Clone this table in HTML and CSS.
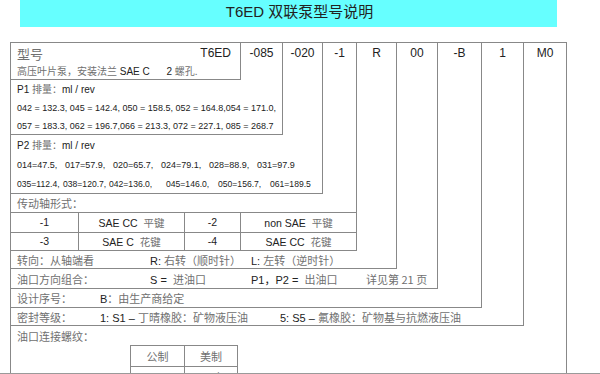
FILE: index.html
```html
<!DOCTYPE html>
<html lang="zh">
<head>
<meta charset="utf-8">
<title>T6ED 双联泵型号说明</title>
<link rel="stylesheet" href="styles.css">
</head>
<body>
<div class="page">
  <div class="banner">T6ED <span>双联泵型号说明</span></div>
  <div class="frame">
    <div class="top">
      <div class="box l7">
        <div class="top">
          <div class="box l6">
            <div class="top">
              <div class="box l5">
                <div class="top">
                  <div class="box l4">
                    <div class="top">
                      <div class="box l3">
                        <div class="top">
                          <div class="box l2">
                            <div class="top">
                              <div class="box l1">
                                <div class="top">
                                  <div class="box l0">
                                    <div class="model-row">
                                      <span class="zh big">型号</span>
                                      <span class="model-code">T6ED</span>
                                    </div>
                                    <div class="model-desc"><span class="zh">高压叶片泵，安装法兰</span> SAE C      2 <span class="zh">螺孔.</span></div>
                                  </div>
                                  <div class="code">-085</div>
                                </div>
                                <div class="row label p1a">P1 <span class="zh">排量：</span>ml / rev</div>
                                <div class="row data p1b">042 = 132.3, 045 = 142.4, 050 = 158.5, 052 = 164.8,054 = 171.0,</div>
                                <div class="row data p1c">057 = 183.3, 062 = 196.7,066 = 213.3, 072 = 227.1, 085 = 268.7</div>
                              </div>
                              <div class="code">-020</div>
                            </div>
                            <div class="row label p2a">P2 <span class="zh">排量：</span>ml / rev</div>
                            <div class="row data p2b">
                              <span class="v48">014=47.5,</span><span class="v48">017=57.9,</span><span class="v48">020=65.7,</span><span class="v48">024=79.1,</span><span class="v48">028=88.9,</span><span>031=97.9</span>
                            </div>
                            <div class="row data p2c">
                              <span class="v46">035=112.4,</span><span class="v46">038=120.7,</span><span class="v57">042=136.0,</span><span class="v52">045=146.0,</span><span class="v52">050=156.7,</span><span>061=189.5</span>
                            </div>
                          </div>
                          <div class="code">-1</div>
                        </div>
                        <div class="row label shaft-label"><span class="zh">传动轴形式：</span></div>
                        <div class="shaft-grid">
                          <div class="cell r1">-1</div>
                          <div class="cell r1">SAE CC  <span class="zh">平键</span></div>
                          <div class="cell r1">-2</div>
                          <div class="cell r1 last">non SAE  <span class="zh">平键</span></div>
                          <div class="cell r2">-3</div>
                          <div class="cell r2">SAE C  <span class="zh">花键</span></div>
                          <div class="cell r2">-4</div>
                          <div class="cell r2 last">SAE CC  <span class="zh">花键</span></div>
                        </div>
                      </div>
                      <div class="code">R</div>
                    </div>
                    <div class="row line h17">
                      <span class="w139 zh">转向：从轴端看</span>
                      <span class="w101">R: <span class="zh">右转（顺时针）</span></span>
                      <span>L: <span class="zh">左转（逆时针）</span></span>
                    </div>
                  </div>
                  <div class="code">00</div>
                </div>
                <div class="row line h19">
                  <span class="w139 zh">油口方向组合：</span>
                  <span class="w101">S =  <span class="zh">进油口</span></span>
                  <span class="w115">P1，P2 =  <span class="zh">出油口</span></span>
                  <span class="zh">详见第 21 页</span>
                </div>
              </div>
              <div class="code">-B</div>
            </div>
            <div class="row line h18">
              <span class="w89 zh">设计序号：</span>
              <span>B<span class="zh">：由生产商给定</span></span>
            </div>
          </div>
          <div class="code">1</div>
        </div>
        <div class="row line h17">
          <span class="w89 zh">密封等级：</span>
          <span class="w180">1: S1 – <span class="zh">丁晴橡胶：矿物液压油</span></span>
          <span>5: S5 – <span class="zh">氟橡胶：矿物基与抗燃液压油</span></span>
        </div>
      </div>
      <div class="code">M0</div>
    </div>
    <div class="row line h19"><span class="zh">油口连接螺纹：</span></div>
    <div class="thread-table">
      <div class="tcell head"><span class="zh">公制</span></div>
      <div class="tcell head last"><span class="zh">美制</span></div>
      <div class="tcell">M0</div>
      <div class="tcell last">00(<span class="zh">略</span>)</div>
    </div>
  </div>
</div>
</body>
</html>
```

FILE: styles.css
```css
html, body {
  margin: 0;
  padding: 0;
  background: #ffffff;
}

body {
  font-family: "Liberation Sans", "Noto Sans CJK SC", sans-serif;
  color: #222222;
}

.zh {
  color: #707070;
  font-family: "Noto Sans CJK SC", sans-serif;
}

.page {
  width: 600px;
  height: 374px;
  box-sizing: border-box;
  border-bottom: 1px solid #9a9a9a;
  overflow: hidden;
  display: flex;
  flex-direction: column;
}

.banner {
  margin-left: 20px;
  width: 537px;
  height: 27px;
  flex: none;
  box-sizing: border-box;
  padding-left: 22px;
  background: #66ffff;
  text-align: center;
  font-size: 15px;
  line-height: 22px;
  color: #222222;
}

.banner span {
  font-family: "Noto Sans CJK SC", sans-serif;
}

.frame {
  margin-top: 15px;
  margin-left: 10px;
  width: 557px;
  flex: 1;
  box-sizing: border-box;
  border: 1px solid #888888;
  border-bottom: none;
}

.top {
  display: flex;
}

.box {
  flex: none;
  box-sizing: border-box;
  border-right: 1px solid #888888;
  border-bottom: 1px solid #888888;
}

.l0 { width: 230px; height: 37px; }
.l1 { width: 272px; }
.l2 { width: 312px; }
.l3 { width: 346px; }
.l4 { width: 386px; }
.l5 { width: 427px; }
.l6 { width: 471px; }
.l7 { width: 513px; }

.code {
  flex: 1;
  text-align: center;
  font-size: 12px;
  line-height: 14px;
  padding-top: 3px;
}

.model-row {
  display: flex;
  justify-content: space-between;
  align-items: center;
  height: 20px;
  padding: 0 9px 0 6px;
}

.big {
  font-size: 13px;
}

.model-code {
  font-size: 12px;
}

.model-desc {
  padding-left: 6px;
  font-size: 10px;
  line-height: 16px;
  white-space: pre;
}

.row {
  padding-left: 6px;
  white-space: pre;
  overflow: hidden;
}

.label {
  font-size: 10px;
}

.data {
  font-size: 9px;
  display: flex;
  align-items: center;
}

.p1a { height: 18px; line-height: 18px; }
.p1b { height: 19px; }
.p1c { height: 17px; }
.p2a { height: 20px; line-height: 20px; }
.p2b { height: 19px; }
.p2c { height: 19px; font-size: 8.6px; }

.v46 { width: 46px; flex: none; }
.v48 { width: 48px; flex: none; }
.v52 { width: 52px; flex: none; }
.v57 { width: 57px; flex: none; }

.shaft-label {
  height: 18px;
  line-height: 18px;
  font-size: 11px;
  border-bottom: 1px solid #888888;
}

.shaft-grid {
  display: grid;
  grid-template-columns: 68px 106px 56px 1fr;
}

.cell {
  box-sizing: border-box;
  border-right: 1px solid #888888;
  text-align: center;
  font-size: 10.5px;
  white-space: pre;
}

.cell.last {
  border-right: none;
}

.cell.r1 {
  height: 20px;
  line-height: 19px;
  border-bottom: 1px solid #888888;
}

.cell.r2 {
  height: 17px;
  line-height: 17px;
}

.line {
  display: flex;
  align-items: center;
  font-size: 11px;
}

.h17 { height: 17px; }
.h18 { height: 18px; }
.h19 { height: 19px; }

.w89 { width: 83px; flex: none; }
.w101 { width: 101px; flex: none; }
.w115 { width: 115px; flex: none; }
.w139 { width: 133px; flex: none; }
.w180 { width: 180px; flex: none; }

.thread-table {
  margin-left: 119px;
  width: 108px;
  box-sizing: border-box;
  border: 1px solid #888888;
  display: grid;
  grid-template-columns: 54px 1fr;
}

.tcell {
  box-sizing: border-box;
  border-right: 1px solid #888888;
  text-align: center;
  font-size: 11px;
  height: 20px;
  line-height: 20px;
}

.tcell.last {
  border-right: none;
}

.tcell.head {
  height: 21px;
  border-bottom: 1px solid #888888;
}
```
